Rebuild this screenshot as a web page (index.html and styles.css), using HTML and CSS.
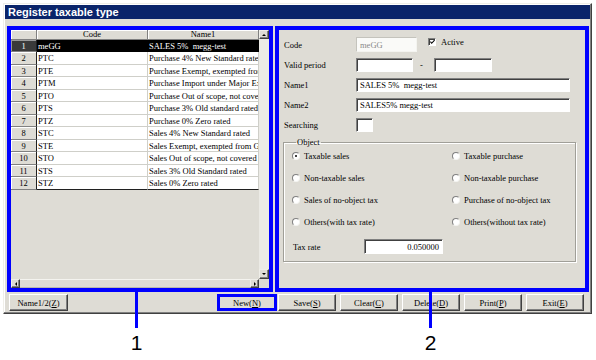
FILE: index.html
```html
<!DOCTYPE html>
<html>
<head>
<meta charset="utf-8">
<link rel="stylesheet" href="styles.css">
</head>
<body>
<div class="window">
  <div class="titlebar">Register taxable type</div>
  <div class="main">
    <div class="mark left-box">
      <div class="grid-top">
        <div class="table">
          <div class="hdr"></div><div class="hdr">Code</div><div class="hdr">Name1</div>
          <div class="rh sel">1</div><div class="cell sel">meGG</div><div class="cell sel">SALES 5%&nbsp; megg-test</div>
          <div class="rh">2</div><div class="cell">PTC</div><div class="cell">Purchase 4% New Standard rated</div>
          <div class="rh">3</div><div class="cell">PTE</div><div class="cell">Purchase Exempt, exempted from GST</div>
          <div class="rh">4</div><div class="cell">PTM</div><div class="cell">Purchase Import under Major Exporter</div>
          <div class="rh">5</div><div class="cell">PTO</div><div class="cell">Purchase Out of scope, not covered</div>
          <div class="rh">6</div><div class="cell">PTS</div><div class="cell">Purchase 3% Old standard rated</div>
          <div class="rh">7</div><div class="cell">PTZ</div><div class="cell">Purchase 0% Zero rated</div>
          <div class="rh">8</div><div class="cell">STC</div><div class="cell">Sales 4% New Standard rated</div>
          <div class="rh">9</div><div class="cell">STE</div><div class="cell">Sales Exempt, exempted from GST</div>
          <div class="rh">10</div><div class="cell">STO</div><div class="cell">Sales Out of scope, not covered</div>
          <div class="rh">11</div><div class="cell">STS</div><div class="cell">Sales 3% Old Standard rated</div>
          <div class="rh">12</div><div class="cell last">STZ</div><div class="cell last">Sales 0% Zero rated</div>
        </div>
        <div class="vscroll">
          <div class="sbtn"><span class="arr up"></span></div>
          <div class="vtrack"></div>
          <div class="sbtn"><span class="arr down"></span></div>
        </div>
      </div>
      <div class="grid-bottom">
        <div class="hscroll">
          <div class="sbtn hb"><span class="arr lt"></span></div>
          <div class="htrack"></div>
          <div class="sbtn hb"><span class="arr rt"></span></div>
        </div>
        <div class="sb-corner"></div>
      </div>
    </div>
    <div class="mark right-box">
      <div class="form">
        <div class="frow">
          <span class="flabel">Code</span>
          <span class="field disabled w-code">meGG</span>
          <span class="check"><svg width="6" height="6" viewBox="0 0 6 6"><polyline points="0.5,2.5 2,4.5 5.5,0.8" fill="none" stroke="#000" stroke-width="1.3"/></svg></span>
          <span class="check-label">Active</span>
        </div>
        <div class="frow">
          <span class="flabel">Valid period</span>
          <span class="field w-date"></span>
          <span class="dash">-</span>
          <span class="field w-date2"></span>
        </div>
        <div class="frow">
          <span class="flabel">Name1</span>
          <span class="field w-name">SALES 5%&nbsp; megg-test</span>
        </div>
        <div class="frow">
          <span class="flabel">Name2</span>
          <span class="field w-name">SALES5% megg-test</span>
        </div>
        <div class="frow">
          <span class="flabel">Searching</span>
          <span class="field w-search"></span>
        </div>
        <fieldset class="group">
          <legend>Object</legend>
          <div class="radios">
            <label class="ropt"><span class="radio on"></span>Taxable sales</label>
            <label class="ropt"><span class="radio"></span>Taxable purchase</label>
            <label class="ropt"><span class="radio"></span>Non-taxable sales</label>
            <label class="ropt"><span class="radio"></span>Non-taxable purchase</label>
            <label class="ropt"><span class="radio"></span>Sales of no-object tax</label>
            <label class="ropt"><span class="radio"></span>Purchase of no-object tax</label>
            <label class="ropt"><span class="radio"></span>Others(with tax rate)</label>
            <label class="ropt"><span class="radio"></span>Others(without tax rate)</label>
          </div>
          <div class="taxrow">
            <span class="taxlabel">Tax rate</span>
            <span class="field w-tax">0.050000</span>
          </div>
        </fieldset>
      </div>
    </div>
  </div>
  <div class="buttons">
    <div class="btn b-name">Name1/2(<u>Z</u>)</div>
    <div class="btn b-new marked">New(<u>N</u>)</div>
    <div class="btn b-save">Save(<u>S</u>)</div>
    <div class="btn">Clear(<u>C</u>)</div>
    <div class="btn">Delete(<u>D</u>)</div>
    <div class="btn">Print(<u>P</u>)</div>
    <div class="btn">Exit(<u>E</u>)</div>
  </div>
</div>
<div class="callout c1"><span class="cline"></span><span class="cnum">1</span></div>
<div class="callout c2"><span class="cline"></span><span class="cnum">2</span></div>
</body>
</html>
```
FILE: styles.css
```css
* { box-sizing: border-box; }
html, body { margin: 0; padding: 0; }
body {
  width: 596px;
  height: 360px;
  background: #ffffff;
  position: relative;
  font-family: "Liberation Serif", "Times New Roman", serif;
  font-size: 8.5px;
  color: #000;
  overflow: hidden;
}
.window {
  margin: 3px 0 0 3px;
  width: 589px;
  height: 311px;
  background: #dedcd5;
  border: 1px solid;
  border-color: #efeee9 #404040 #404040 #efeee9;
  box-shadow: inset -1px -1px 0 #808080, inset 1px 1px 0 #ffffff;
  padding: 1px;
  display: flex;
  flex-direction: column;
}
.titlebar {
  height: 14px;
  background: #0a246a;
  color: #fff;
  font-family: "Liberation Sans", Arial, sans-serif;
  font-weight: bold;
  font-size: 11px;
  line-height: 14px;
  padding-left: 3px;
  white-space: nowrap;
}
.main {
  display: flex;
  gap: 2px;
  padding: 7px 0 0 2px;
  height: 273px;
}
.mark { border: 4px solid #0000ff; }
.left-box {
  width: 266px;
  height: 266px;
  display: flex;
  flex-direction: column;
}
.grid-top { display: flex; height: 249px; }
.table {
  width: 248px;
  display: grid;
  grid-template-columns: 26px 111px 111px;
  grid-template-rows: 10px repeat(6, 12px 13px);
  align-content: start;
}
.hdr {
  background: #dedcd5;
  border-right: 1px solid #808080;
  border-bottom: 1px solid #808080;
  box-shadow: inset 1px 1px 0 #fff;
  display: flex;
  align-items: center;
  justify-content: center;
  line-height: 9px;
}
.rh {
  background: #dedcd5;
  border-right: 1px solid #202020;
  border-bottom: 1px solid #808080;
  box-shadow: inset 1px 1px 0 #fff;
  display: flex;
  align-items: center;
  justify-content: center;
}
.rh.sel { background: #3a3a3a; color: #fff; box-shadow: inset 1px 1px 0 #9a9a9a; }
.cell {
  background: #fff;
  border-right: 1px solid #cfcfc9;
  border-bottom: 1px solid #cfcfc9;
  padding-left: 1px;
  white-space: nowrap;
  overflow: hidden;
  display: flex;
  align-items: center;
}
.cell.sel { background: #000; color: #fff; border-color: #000; }
.cell.last { border-bottom: 1px solid #202020; }
.vscroll {
  width: 10px;
  display: flex;
  flex-direction: column;
}
.sbtn {
  width: 10px;
  height: 9px;
  background: #dedcd5;
  border: 1px solid;
  border-color: #efeee9 #404040 #404040 #efeee9;
  box-shadow: inset -1px -1px 0 #808080;
  display: flex;
  align-items: center;
  justify-content: center;
  flex: none;
}
.vscroll .sbtn:last-child { height: 10px; }
.vtrack { flex: 1; background: #ecebe6; }
.arr { width: 0; height: 0; border: 2px solid transparent; }
.arr.up { border-bottom: 2px solid #000; border-top-width: 0; }
.arr.down { border-top: 2px solid #000; border-bottom-width: 0; }
.arr.lt { border-right: 2px solid #000; border-left-width: 0; }
.arr.rt { border-left: 2px solid #000; border-right-width: 0; }
.grid-bottom { display: flex; height: 9px; }
.hscroll { width: 248px; display: flex; }
.sbtn.hb { width: 9px; height: 9px; }
.htrack {
  flex: 1;
  background: #dedcd5;
  border-top: 1px solid #f4f3ef;
  border-bottom: 1px solid #b8b7b0;
}
.sb-corner { width: 10px; background: #dedcd5; }
.right-box {
  width: 314px;
  height: 266px;
}
.form { padding: 7px 0 0 5px; }
.frow {
  display: flex;
  align-items: center;
  height: 15px;
  margin-bottom: 5px;
}
.flabel { width: 72px; white-space: nowrap; }
.field {
  height: 15px;
  background: #fff;
  border: 1px solid;
  border-color: #808080 #fff #fff #808080;
  box-shadow: inset 1px 1px 0 #404040;
  padding-left: 3px;
  display: flex;
  align-items: center;
  white-space: nowrap;
  overflow: hidden;
}
.field.disabled {
  background: #fafaf8;
  border-color: #c4c3bc #f4f4f0 #f4f4f0 #c4c3bc;
  box-shadow: none;
  color: #8a8a8a;
}
.w-code { width: 61px; }
.w-date { width: 57px; height: 14px; }
.w-date2 { width: 58px; height: 14px; }
.w-name { width: 214px; height: 14px; }
.w-search { width: 17px; height: 14px; }
.w-tax { width: 79px; justify-content: flex-end; padding-right: 3px; }
.dash { width: 21px; padding-left: 7px; }
.check {
  align-self: flex-start;
  margin: 1px 0 0 11px;
  width: 8px;
  height: 8px;
  background: #fff;
  border: 1px solid;
  border-color: #808080 #fff #fff #808080;
  box-shadow: inset 1px 1px 0 #404040;
  display: flex;
  align-items: center;
  justify-content: center;
  padding: 0;
}
.check svg { display: block; margin: 0 0 0 1px; }
.check-label { align-self: flex-start; margin-left: 5px; line-height: 11px; }
.group {
  margin: 1px 0 0 -1px;
  width: 293px;
  border: 1px solid #a09f98;
  box-shadow: inset 1px 1px 0 #fff, 1px 1px 0 #fff;
  padding: 0 0 7px 8px;
  min-width: 0;
}
.group legend {
  font-size: 8.5px;
  line-height: 10px;
  padding: 0 1px;
  margin-left: 4px;
}
.radios {
  display: grid;
  grid-template-columns: 160px 1fr;
  grid-auto-rows: 18px;
  row-gap: 4px;
}
.ropt {
  display: flex;
  align-items: center;
  gap: 4px;
  white-space: nowrap;
}
.radio {
  width: 8px;
  height: 8px;
  border-radius: 50%;
  background: #fff;
  border: 1px solid;
  border-color: #808080 #f4f4f0 #f4f4f0 #808080;
  display: flex;
  align-items: center;
  justify-content: center;
  flex: none;
}
.radio.on::after {
  content: "";
  width: 2px;
  height: 2px;
  border-radius: 50%;
  background: #000;
}
.taxrow {
  margin-top: 8px;
  display: flex;
  align-items: center;
  height: 15px;
}
.taxlabel { width: 72px; padding-left: 1px; }
.buttons {
  display: flex;
  margin-top: 2px;
  height: 17px;
  padding-left: 4px;
}
.btn {
  width: 58px;
  height: 17px;
  background: #dedcd5;
  border: 1px solid;
  border-color: #fff #404040 #404040 #fff;
  box-shadow: inset -1px -1px 0 #808080;
  display: flex;
  align-items: center;
  justify-content: center;
  white-space: nowrap;
  margin-left: 4px;
}
.btn.b-name { width: 59px; margin-left: 0; }
.btn.b-new { width: 60px; margin-left: 149px; }
.btn.b-save { margin-left: 1px; }
.btn.marked { border: 3px solid #0000ff; box-shadow: none; }
.callout {
  position: absolute;
  top: 292px;
  width: 20px;
  display: flex;
  flex-direction: column;
  align-items: center;
}
.c1 { left: 126.5px; }
.c2 { left: 420.5px; }
.cline { width: 3px; height: 36px; background: #0000ff; }
.cnum {
  margin-top: 4px;
  font-family: "Liberation Sans", Arial, sans-serif;
  font-size: 21px;
  line-height: 21px;
}
```
